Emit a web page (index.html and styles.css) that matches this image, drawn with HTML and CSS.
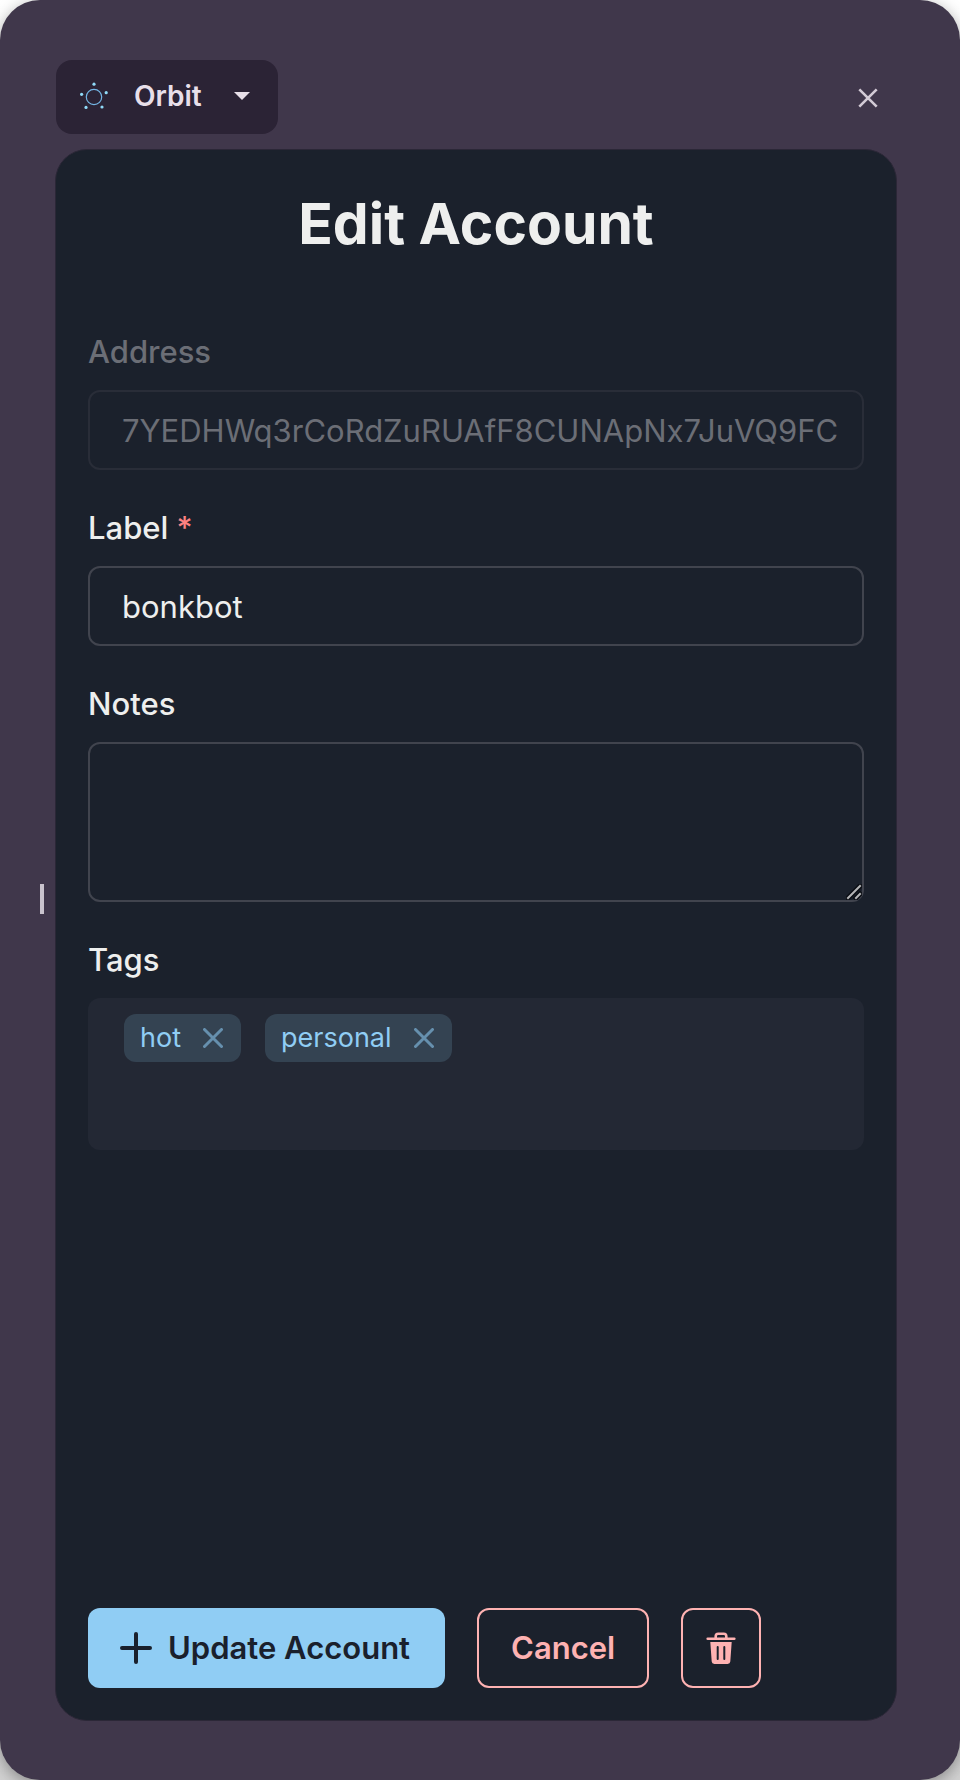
FILE: index.html
```html
<!DOCTYPE html>
<html lang="en">
<head>
<meta charset="utf-8">
<meta name="viewport" content="width=device-width, initial-scale=1">
<title>Edit Account</title>
<link rel="stylesheet" href="styles.css">
</head>
<body>
<div class="shell">
  <div class="handle-column"><span class="handle"></span></div>
  <div class="content">
    <header class="topbar">
      <button class="app-menu" type="button">
        <svg class="orbit-icon" viewBox="0 0 28 28" aria-hidden="true">
          <circle cx="14" cy="15" r="7.7" fill="none" stroke="#74b5e4" stroke-width="1.2"/>
          <g fill="#90daf8">
            <circle cx="14" cy="2.2" r="1.6"/><circle cx="26.2" cy="10.7" r="1.6"/>
            <circle cx="22" cy="25" r="1.6"/><circle cx="6" cy="25.4" r="1.6"/><circle cx="1.6" cy="12.3" r="1.6"/>
          </g>
        </svg>
        <span class="app-name">Orbit</span>
        <svg class="caret" viewBox="0 0 16 8" aria-hidden="true"><path d="M0 0h16L8 8z" fill="currentColor"/></svg>
      </button>
      <button class="close" type="button" aria-label="Close">
        <svg viewBox="0 0 20 20" aria-hidden="true"><path d="M1.3 1.3l17.4 17.4M18.7 1.3L1.3 18.7" fill="none" stroke="currentColor" stroke-width="2.6"/></svg>
      </button>
    </header>
    <main class="card">
      <h1 class="title">Edit Account</h1>
      <form class="form">
        <div class="field">
          <label class="label label-disabled" for="address">Address</label>
          <input class="input" id="address" type="text" value="7YEDHWq3rCoRdZuRUAfF8CUNApNx7JuVQ9FC" disabled>
        </div>
        <div class="field">
          <label class="label" for="label">Label <span class="required">*</span></label>
          <input class="input" id="label" type="text" value="bonkbot" required>
        </div>
        <div class="field">
          <label class="label" for="notes">Notes</label>
          <div class="notes-wrap">
            <textarea class="input notes" id="notes"></textarea>
            <svg class="grip" viewBox="0 0 16 16" aria-hidden="true">
              <g fill="none" stroke-linecap="square"><path d="M2 14L14 2M10 14l4-4" stroke="#0b0e14" stroke-width="5"/><path d="M2 14L14 2M10 14l4-4" stroke="#b4b5b7" stroke-width="2"/></g>
            </svg>
          </div>
        </div>
        <div class="field">
          <span class="label" id="tags-label">Tags</span>
          <div class="tags" role="group" aria-labelledby="tags-label">
            <span class="tag">hot
              <button class="tag-remove" type="button" aria-label="Remove hot"><svg viewBox="0 0 20 20" aria-hidden="true"><path d="M1.5 1.5l17 17M18.5 1.5l-17 17"/></svg></button>
            </span>
            <span class="tag">personal
              <button class="tag-remove" type="button" aria-label="Remove personal"><svg viewBox="0 0 20 20" aria-hidden="true"><path d="M1.5 1.5l17 17M18.5 1.5l-17 17"/></svg></button>
            </span>
          </div>
        </div>
        <div class="actions">
          <button class="btn btn-primary" type="submit">
            <svg class="plus" viewBox="0 0 32 32" aria-hidden="true"><path d="M16 2v28M2 16h28" fill="none" stroke="currentColor" stroke-width="4" stroke-linecap="round"/></svg>
            Update Account
          </button>
          <button class="btn btn-outline" type="button">Cancel</button>
          <button class="btn btn-outline btn-icon" type="button" aria-label="Delete account">
            <svg class="trash" viewBox="0 0 32 32" aria-hidden="true">
              <path d="M2.7 6.7h26.6" fill="none" stroke="currentColor" stroke-width="2.6" stroke-linecap="round"/>
              <path d="M10.7 6V4.200a2.500 2.500 0 0 1 2.500-2.500h5.600a2.500 2.500 0 0 1 2.500 2.500V6" fill="none" stroke="currentColor" stroke-width="2.6"/>
              <path d="M5.300 10h21.400L25.300 29.500a2.700 2.700 0 0 1-2.700 2.500H9.400a2.700 2.700 0 0 1-2.700-2.500z" fill="currentColor"/>
              <path d="M12.700 15v12M19.300 15v12" fill="none" stroke="#1b212c" stroke-width="2" stroke-linecap="round"/>
            </svg>
          </button>
        </div>
      </form>
    </main>
  </div>
</div>
</body>
</html>
```
FILE: styles.css
```css
* {
  box-sizing: border-box;
}

body {
  margin: 0;
  background: linear-gradient(#ffffff, #d2d2d2);
  color: #eeefee;
  font-family: Inter, "Liberation Sans", sans-serif;
  font-size: 31px;
  line-height: 48px;
}

button {
  border: 0;
  padding: 0;
  background: none;
  color: inherit;
  font: inherit;
  cursor: pointer;
}

svg {
  display: block;
}

.shell {
  display: flex;
  min-height: 100vh;
  padding: 60px 63px 59px 0;
  border-radius: 40px;
  background: #40374b;
  box-shadow: 0 4px 16px rgba(0, 0, 0, 0.35);
}

.handle-column {
  display: flex;
  flex: 0 0 55px;
  align-items: center;
  justify-content: flex-end;
  padding: 16px 11px 0 0;
}

.handle {
  width: 4px;
  height: 30px;
  background: #c9c3cd;
}

.content {
  display: flex;
  flex: 1;
  flex-direction: column;
  gap: 15px;
  min-width: 0;
}

.topbar {
  display: flex;
  align-items: center;
  justify-content: space-between;
  padding: 0 17px 0 1px;
}

.app-menu {
  display: flex;
  align-items: center;
  height: 74px;
  padding: 0 28px 2px 24px;
  border-radius: 16px;
  background: #2b2335;
  color: #e8dfe9;
}

.orbit-icon {
  width: 28px;
  height: 28px;
  margin-right: 26px;
}

.app-name {
  font-size: 28px;
  font-weight: 600;
}

.caret {
  width: 16px;
  height: 8px;
  margin-left: 32px;
}

.close {
  padding: 2px 2px 0;
  color: #d3cbd6;
}

.close svg {
  width: 20px;
  height: 20px;
}

.card {
  display: flex;
  flex: 1;
  flex-direction: column;
  padding: 38px 32px 32px;
  border: 1px solid #2b2737;
  border-radius: 32px;
  background: #1b212c;
}

.title {
  margin: 0 0 68px;
  font-size: 57px;
  font-weight: 700;
  line-height: 72px;
  text-align: center;
}

.form {
  display: flex;
  flex: 1;
  flex-direction: column;
  gap: 34px;
}

.field {
  display: flex;
  flex-direction: column;
  gap: 14px;
}

.label {
  font-weight: 500;
}

.label-disabled {
  color: #6b6e76;
}

.required {
  color: #fc8181;
}

.input {
  display: block;
  width: 100%;
  height: 80px;
  padding: 0 24px 0 32px;
  border: 2px solid #41444e;
  border-radius: 12px;
  outline: 0;
  background: transparent;
  color: inherit;
  font: inherit;
}

.input:disabled {
  border-color: #292d38;
  color: #6b6e76;
}

.notes-wrap {
  position: relative;
}

.notes {
  height: 160px;
  padding: 16px 32px;
  resize: vertical;
}

.notes::-webkit-resizer {
  display: none;
}

.grip {
  position: absolute;
  right: 2px;
  bottom: 2px;
  width: 16px;
  height: 16px;
  pointer-events: none;
}

.tags {
  display: flex;
  flex-wrap: wrap;
  align-items: flex-start;
  gap: 24px;
  min-height: 152px;
  padding: 16px 36px;
  border-radius: 12px;
  background: #232834;
}

.tag {
  display: flex;
  align-items: center;
  gap: 22px;
  height: 48px;
  padding: 0 18px 0 16px;
  border-radius: 12px;
  background: #344352;
  color: #90cdf4;
  font-size: 27px;
}

.tag-remove svg {
  width: 20px;
  height: 20px;
  fill: none;
  stroke: #6690ae;
  stroke-width: 3;
  stroke-linecap: round;
}

.actions {
  display: flex;
  gap: 32px;
  margin-top: auto;
}

.btn {
  display: flex;
  align-items: center;
  justify-content: center;
  gap: 16px;
  height: 80px;
  padding: 0 32px;
  border-radius: 12px;
  font-weight: 600;
}

.btn-primary {
  padding-right: 35px;
  background: #90cdf4;
  color: #1a202c;
}

.btn-outline {
  border: 2px solid #feb2b2;
  color: #feb2b2;
}

.btn-icon {
  width: 80px;
  padding: 0;
}

.plus,
.trash {
  width: 32px;
  height: 32px;
}
```
